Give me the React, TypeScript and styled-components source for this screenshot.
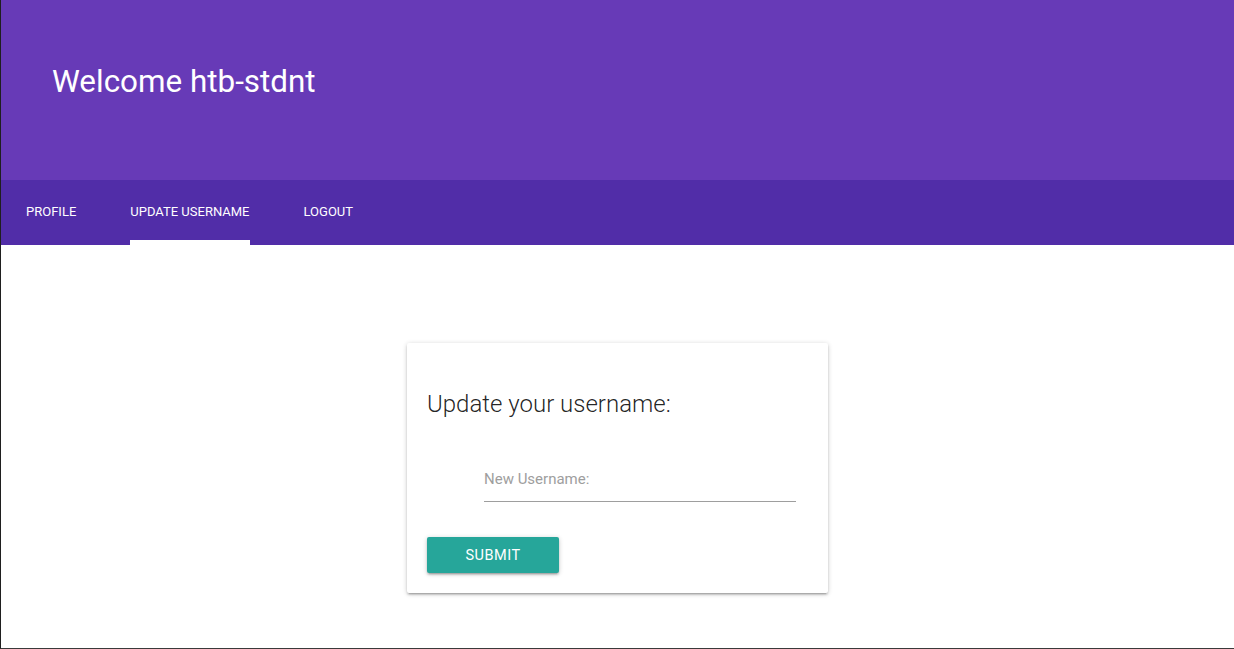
import React from "react";
import styled, { createGlobalStyle } from "styled-components";

const Global = createGlobalStyle`
  html, body { margin: 0; padding: 0; background: #fff; }
  body { font-family: Roboto, "Liberation Sans", sans-serif; }
  * { box-sizing: border-box; }
`;

const Page = styled.div`
  height: 649px;
  display: flex;
  flex-direction: column;
  border-left: 1px solid #1f1f1f;
  border-bottom: 1px solid #3a3a3a;
  overflow: hidden;
`;

const Header = styled.header`
  height: 180px;
  flex: none;
  background: #673ab7;
  display: flex;
  align-items: center;
  padding: 0 0 17px 51px;
`;

const Title = styled.h1`
  margin: 0;
  color: #fff;
  font-weight: 400;
  font-size: 31.4px;
  letter-spacing: 0;
`;

const Nav = styled.nav`
  height: 65px;
  flex: none;
  background: #512da8;
  display: flex;
  align-items: stretch;
  padding-left: 25px;
  gap: 54px;
`;

const Tab = styled.a<{ $active?: boolean }>`
  position: relative;
  display: flex;
  align-items: center;
  padding-bottom: 3px;
  color: #fff;
  font-size: 13px;
  text-transform: uppercase;
  text-decoration: none;
  cursor: pointer;
  &::after {
    content: "";
    position: absolute;
    left: 0;
    right: 0;
    bottom: 0;
    height: 5px;
    background: ${(p) => (p.$active ? "#fff" : "transparent")};
  }
`;

const Main = styled.main`
  flex: 1;
  display: flex;
  justify-content: center;
  padding-top: 98px;
`;

const Card = styled.section`
  width: 421px;
  height: 250px;
  background: #fff;
  border-radius: 2px;
  box-shadow: 0 2px 2px 0 rgba(0, 0, 0, 0.14), 0 3px 1px -2px rgba(0, 0, 0, 0.12),
    0 1px 5px 0 rgba(0, 0, 0, 0.2);
  padding: 20px;
  display: flex;
  flex-direction: column;
`;

const CardTitle = styled.h2`
  margin: 25px 0 0 0;
  font-size: 24px;
  font-weight: 300;
  color: rgba(0, 0, 0, 0.87);
  line-height: 32px;
`;

const Field = styled.label`
  display: block;
  margin: 44px 12px 0 57px;
  border-bottom: 1px solid #9e9e9e;
  height: 38px;
`;

const Input = styled.input`
  width: 100%;
  border: none;
  outline: none;
  background: transparent;
  font-family: Roboto, "Liberation Sans", sans-serif;
  font-size: 15px;
  color: #9e9e9e;
  padding: 0;
  height: 30px;
  &::placeholder { color: #9e9e9e; opacity: 1; }
`;

const Button = styled.button`
  margin-top: 35px;
  width: 132px;
  height: 36px;
  border: none;
  border-radius: 2px;
  background: #26a69a;
  color: #fff;
  font-family: Roboto, "Liberation Sans", sans-serif;
  font-size: 14.5px;
  letter-spacing: 0.5px;
  text-transform: uppercase;
  box-shadow: 0 2px 2px 0 rgba(0, 0, 0, 0.14), 0 3px 1px -2px rgba(0, 0, 0, 0.12),
    0 1px 5px 0 rgba(0, 0, 0, 0.2);
  cursor: pointer;
`;

export default function App() {
  return (
    <>
      <Global />
      <Page>
        <Header>
          <Title>Welcome htb-stdnt</Title>
        </Header>
        <Nav>
          <Tab>Profile</Tab>
          <Tab $active>Update Username</Tab>
          <Tab>Logout</Tab>
        </Nav>
        <Main>
          <Card>
            <CardTitle>Update your username:</CardTitle>
            <Field>
              <Input placeholder="New Username:" />
            </Field>
            <Button>Submit</Button>
          </Card>
        </Main>
      </Page>
    </>
  );
}
